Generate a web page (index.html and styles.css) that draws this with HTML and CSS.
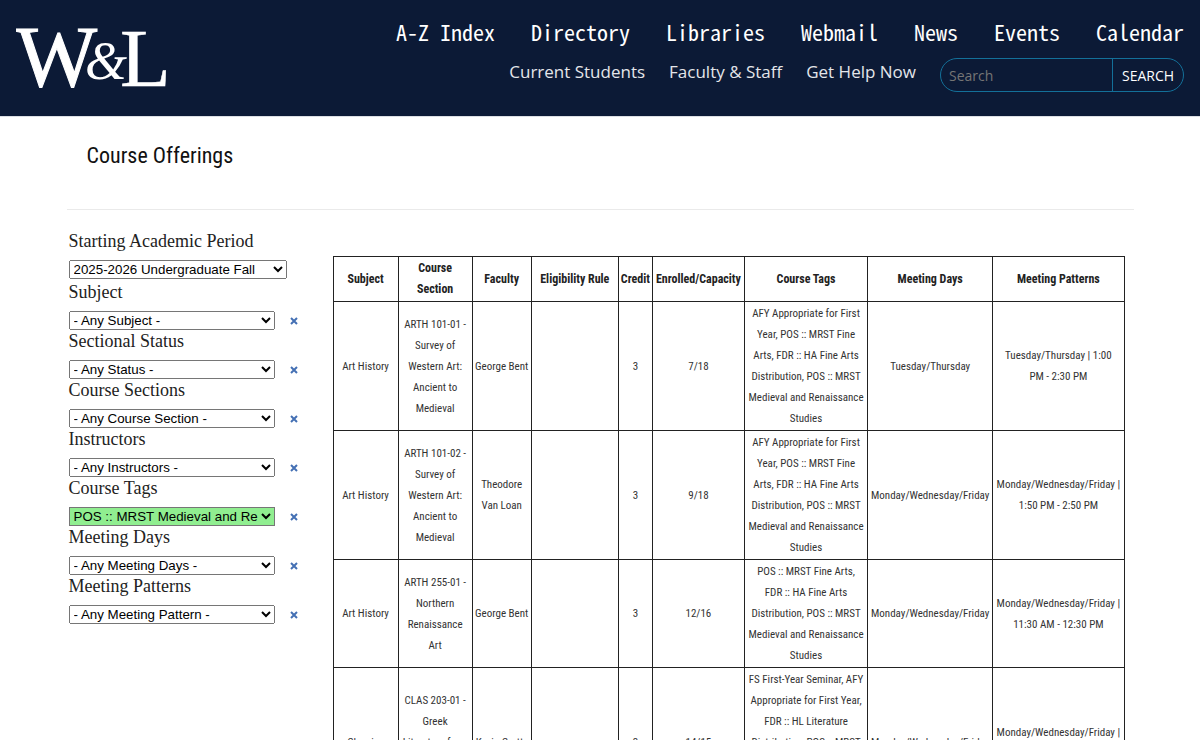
FILE: index.html
```html
<!DOCTYPE html>
<html lang="en">
<head>
  <meta charset="UTF-8" />
  <meta name="viewport" content="width=device-width, initial-scale=1.0"/>
  <title>Course Offerings</title>
  <link rel="stylesheet" href="styles.css">
</head>
<body>

  <header class="site-header">
    <a class="logo" href="#" aria-label="W&amp;L home">
      <svg width="160" height="72" viewBox="0 0 160 72" fill="#fff" font-family="'Liberation Serif', serif">
        <text x="0" y="62" font-size="86" stroke="#fff">W</text>
        <text x="69" y="55" font-size="54" font-style="italic">&amp;</text>
        <text x="104" y="62" font-size="83" stroke="#fff" stroke-width="0.5">L</text>
      </svg>
    </a>
    <div class="header-menus">
      <nav class="main-nav">
        <a href="#">A-Z Index</a>
        <a href="#">Directory</a>
        <a href="#">Libraries</a>
        <a href="#">Webmail</a>
        <a href="#">News</a>
        <a href="#">Events</a>
        <a href="#">Calendar</a>
      </nav>
      <div class="sub-row">
        <nav class="sub-nav">
          <a href="#">Current Students</a>
          <a href="#">Faculty &amp; Staff</a>
          <a href="#">Get Help Now</a>
        </nav>
        <form class="search">
          <input type="search" placeholder="Search" aria-label="Search">
          <button type="submit">SEARCH</button>
        </form>
      </div>
    </div>
  </header>

  <main class="page">
    <h1>Course Offerings</h1>

    <div class="content">
      <form class="filters">
        <div class="filter filter-period">
          <label for="period">Starting Academic Period</label>
          <select id="period"><option>2025-2026 Undergraduate Fall</option></select>
        </div>
        <div class="filter">
          <label for="subject">Subject</label>
          <select id="subject"><option>- Any Subject -</option></select>
          <button type="button" class="clear" aria-label="Clear subject"><svg viewBox="0 0 8 8"><path d="M1 1l6 6M7 1l-6 6"/></svg></button>
        </div>
        <div class="filter">
          <label for="status">Sectional Status</label>
          <select id="status"><option>- Any Status -</option></select>
          <button type="button" class="clear" aria-label="Clear status"><svg viewBox="0 0 8 8"><path d="M1 1l6 6M7 1l-6 6"/></svg></button>
        </div>
        <div class="filter">
          <label for="section">Course Sections</label>
          <select id="section"><option>- Any Course Section -</option></select>
          <button type="button" class="clear" aria-label="Clear section"><svg viewBox="0 0 8 8"><path d="M1 1l6 6M7 1l-6 6"/></svg></button>
        </div>
        <div class="filter">
          <label for="instructor">Instructors</label>
          <select id="instructor"><option>- Any Instructors -</option></select>
          <button type="button" class="clear" aria-label="Clear instructor"><svg viewBox="0 0 8 8"><path d="M1 1l6 6M7 1l-6 6"/></svg></button>
        </div>
        <div class="filter">
          <label for="tags">Course Tags</label>
          <select id="tags" class="selected"><option>POS :: MRST Medieval and Renaissance Studies</option></select>
          <button type="button" class="clear" aria-label="Clear tags"><svg viewBox="0 0 8 8"><path d="M1 1l6 6M7 1l-6 6"/></svg></button>
        </div>
        <div class="filter">
          <label for="days">Meeting Days</label>
          <select id="days"><option>- Any Meeting Days -</option></select>
          <button type="button" class="clear" aria-label="Clear days"><svg viewBox="0 0 8 8"><path d="M1 1l6 6M7 1l-6 6"/></svg></button>
        </div>
        <div class="filter">
          <label for="pattern">Meeting Patterns</label>
          <select id="pattern"><option>- Any Meeting Pattern -</option></select>
          <button type="button" class="clear" aria-label="Clear pattern"><svg viewBox="0 0 8 8"><path d="M1 1l6 6M7 1l-6 6"/></svg></button>
        </div>
      </form>

      <table class="courses">
        <colgroup>
          <col class="col-subject">
          <col class="col-section">
          <col class="col-faculty">
          <col class="col-rule">
          <col class="col-credit">
          <col class="col-enrolled">
          <col class="col-tags">
          <col class="col-days">
          <col class="col-pattern">
        </colgroup>
        <thead>
          <tr>
            <th>Subject</th>
            <th>Course<br>Section</th>
            <th>Faculty</th>
            <th>Eligibility Rule</th>
            <th>Credit</th>
            <th>Enrolled/Capacity</th>
            <th>Course Tags</th>
            <th>Meeting Days</th>
            <th>Meeting Patterns</th>
          </tr>
        </thead>
        <tbody>
          <tr>
            <td>Art History</td>
            <td>ARTH 101-01 - Survey of Western Art: Ancient to Medieval</td>
            <td>George Bent</td>
            <td></td>
            <td>3</td>
            <td>7/18</td>
            <td>AFY Appropriate for First Year, POS :: MRST Fine Arts, FDR :: HA Fine Arts Distribution, POS :: MRST Medieval and Renaissance Studies</td>
            <td>Tuesday/Thursday</td>
            <td>Tuesday/Thursday | 1:00<br>PM - 2:30 PM</td>
          </tr>
          <tr>
            <td>Art History</td>
            <td>ARTH 101-02 - Survey of Western Art: Ancient to Medieval</td>
            <td>Theodore Van Loan</td>
            <td></td>
            <td>3</td>
            <td>9/18</td>
            <td>AFY Appropriate for First Year, POS :: MRST Fine Arts, FDR :: HA Fine Arts Distribution, POS :: MRST Medieval and Renaissance Studies</td>
            <td>Monday/Wednesday/Friday</td>
            <td>Monday/Wednesday/Friday | 1:50 PM - 2:50 PM</td>
          </tr>
          <tr>
            <td>Art History</td>
            <td>ARTH 255-01 - Northern Renaissance<br>Art</td>
            <td>George Bent</td>
            <td></td>
            <td>3</td>
            <td>12/16</td>
            <td>POS :: MRST Fine Arts,<br>FDR :: HA Fine Arts<br>Distribution, POS :: MRST Medieval and Renaissance Studies</td>
            <td>Monday/Wednesday/Friday</td>
            <td>Monday/Wednesday/Friday | 11:30 AM - 12:30 PM</td>
          </tr>
          <tr>
            <td>Classics</td>
            <td>CLAS 203-01 - Greek<br>Literature from Homer to the Hellenistic</td>
            <td>Kevin Crotty</td>
            <td></td>
            <td>3</td>
            <td>14/15</td>
            <td>FS First-Year Seminar, AFY Appropriate for First Year, FDR :: HL Literature Distribution, POS :: MRST Literature, POS :: MRST Medieval and Renaissance Studies</td>
            <td>Monday/Wednesday/Friday</td>
            <td>Monday/Wednesday/Friday | 12:40 PM - 1:40 PM</td>
          </tr>
        </tbody>
      </table>
    </div>
  </main>

</body>
</html>
```
FILE: styles.css
```css
body {
  margin: 0;
  background: #fff;
  color: #222;
  font-family: 'Liberation Sans', Arial, sans-serif;
}

a {
  color: inherit;
  text-decoration: none;
}

/* header */
.site-header {
  display: flex;
  justify-content: space-between;
  align-items: flex-start;
  padding: 18px 16px 20px;
  border-bottom: 1px solid #dcdfe4;
  background: #0c1a36;
  color: #fff;
}

.logo {
  padding-top: 6px;
}

.logo svg {
  display: block;
}

.header-menus {
  display: flex;
  flex-direction: column;
  align-items: flex-end;
  gap: 14px;
}

.main-nav {
  display: flex;
  gap: 36px;
  font-family: 'Noto Sans Mono CJK SC', monospace;
  font-size: 22px;
  line-height: 26px;
}

.sub-row {
  display: flex;
  gap: 24px;
}

.sub-nav {
  display: flex;
  gap: 24px;
  font-family: 'Open Sans', sans-serif;
  font-size: 17px;
  line-height: 28px;
  color: #e4e6ea;
}

.search {
  display: flex;
  box-sizing: border-box;
  width: 244px;
  height: 34px;
  border: 1px solid #137099;
  border-radius: 17px;
  overflow: hidden;
}

.search input,
.search button {
  border: 0;
  background: transparent;
  color: #fff;
  font-family: 'Open Sans', sans-serif;
  font-size: 14px;
}

.search input {
  flex: 1;
  min-width: 0;
  padding: 0 8px;
}

.search input::placeholder {
  color: #757575;
}

.search button {
  width: 71px;
  padding: 0;
  border-left: 1px solid #137099;
  font-weight: 500;
}

/* page */
.page {
  max-width: 1067px;
  margin: 0 auto;
}

h1 {
  margin: 0;
  padding: 24px 20px 38px;
  border-bottom: 1px solid #eaeaea;
  color: #111;
  font-family: 'Roboto Condensed', Roboto, sans-serif;
  font-size: 22px;
  font-weight: normal;
  line-height: 30px;
}

.content {
  display: flex;
  align-items: flex-start;
  gap: 24px;
  padding: 20px 9px 20px 2px;
}

/* filters */
.filters {
  flex: 0 0 240px;
}

.filter {
  display: flex;
  flex-wrap: wrap;
  align-items: center;
}

.filter label {
  width: 100%;
  margin-bottom: 7px;
  font-family: 'Liberation Serif', serif;
  font-size: 18px;
  line-height: 23px;
}

.filter select {
  width: 206px;
  height: 19px;
  padding: 0;
}

.filter-period {
  margin-bottom: 2px;
}

.filter-period select {
  width: 218px;
}

.filter .selected {
  background: #90ee90;
}

.clear {
  display: flex;
  margin-left: 15px;
  padding: 0;
  border: 0;
  background: none;
  cursor: pointer;
}

.clear svg {
  width: 8px;
  height: 8px;
  fill: none;
  stroke: #4470b4;
  stroke-width: 2;
}

/* table */
.courses {
  flex: 1;
  margin-top: 26px;
  table-layout: fixed;
  width: 100%;
  border-collapse: collapse;
  font-family: 'Roboto Condensed', Roboto, sans-serif;
  font-size: 11px;
  line-height: 21px;
  text-align: center;
}

.courses th,
.courses td {
  padding: 1px;
  border: 1px solid #222;
}

.courses th {
  padding: 1px 0;
  font-size: 12px;
}

.courses td {
  color: #333;
}

.col-subject { width: 65px; }
.col-section { width: 74px; }
.col-faculty { width: 59px; }
.col-rule { width: 87px; }
.col-credit { width: 34px; }
.col-enrolled { width: 92px; }
.col-tags { width: 123px; }
.col-days { width: 125px; }
.col-pattern { width: 131px; }
```
